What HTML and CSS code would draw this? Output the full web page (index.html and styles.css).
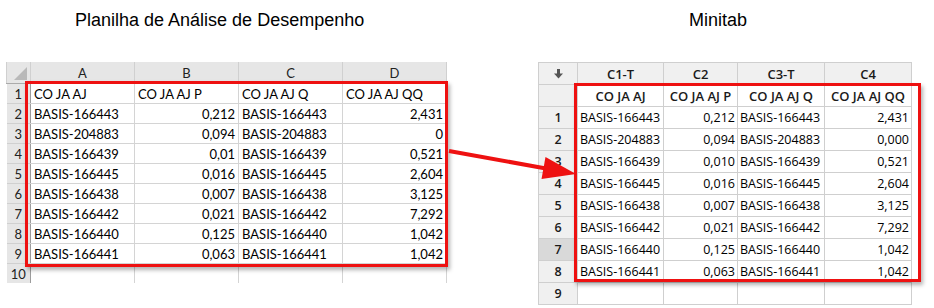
FILE: index.html
```html
<!DOCTYPE html>
<html lang="pt">

<head>
    <meta charset="UTF-8">
    <title>Planilha x Minitab</title>
    <link rel="stylesheet" href="styles.css">
</head>

<body>
    <div class="page">
        <section class="panel excel">
            <h1 class="title">Planilha de Análise de Desempenho</h1>
            <div class="sheet">
                <table class="grid">
                    <colgroup>
                        <col class="rowhead">
                        <col><col><col><col>
                    </colgroup>
                    <thead>
                        <tr>
                            <th class="corner"><span class="tri"></span></th>
                            <th>A</th>
                            <th>B</th>
                            <th>C</th>
                            <th>D</th>
                        </tr>
                    </thead>
                    <tbody id="excel-body"></tbody>
                </table>
                <div class="highlight"></div>
            </div>
        </section>

        <section class="panel minitab">
            <h1 class="title">Minitab</h1>
            <div class="sheet">
                <table class="grid">
                    <colgroup>
                        <col class="rowhead">
                        <col class="c1"><col class="c2"><col class="c3"><col class="c4">
                    </colgroup>
                    <thead>
                        <tr class="labels">
                            <th class="corner">
                                <svg width="9" height="10" viewBox="0 0 9 10">
                                    <rect x="3" y="0" width="3" height="5" fill="#555"/>
                                    <path d="M0 4.5 H9 L4.5 9.5 Z" fill="#555"/>
                                </svg>
                            </th>
                            <th>C1-T</th>
                            <th>C2</th>
                            <th>C3-T</th>
                            <th>C4</th>
                        </tr>
                        <tr class="names">
                            <th class="corner"></th>
                            <th>CO JA AJ</th>
                            <th>CO JA AJ P</th>
                            <th>CO JA AJ Q</th>
                            <th>CO JA AJ QQ</th>
                        </tr>
                    </thead>
                    <tbody id="minitab-body"></tbody>
                </table>
                <div class="highlight"></div>
            </div>
        </section>

        <svg class="arrow" width="934" height="308" viewBox="0 0 934 308">
            <line x1="449" y1="151" x2="546" y2="168.5" stroke="#ee1111" stroke-width="4"/>
            <polygon points="576,174 545.5,157 541.5,179" fill="#ee1111"/>
        </svg>
    </div>

    <script>
        const rows = [
            ['BASIS-166443', '0,212', '0,212', 'BASIS-166443', '2,431', '2,431'],
            ['BASIS-204883', '0,094', '0,094', 'BASIS-204883', '0', '0,000'],
            ['BASIS-166439', '0,01', '0,010', 'BASIS-166439', '0,521', '0,521'],
            ['BASIS-166445', '0,016', '0,016', 'BASIS-166445', '2,604', '2,604'],
            ['BASIS-166438', '0,007', '0,007', 'BASIS-166438', '3,125', '3,125'],
            ['BASIS-166442', '0,021', '0,021', 'BASIS-166442', '7,292', '7,292'],
            ['BASIS-166440', '0,125', '0,125', 'BASIS-166440', '1,042', '1,042'],
            ['BASIS-166441', '0,063', '0,063', 'BASIS-166441', '1,042', '1,042']
        ];

        function buildExcel() {
            const body = document.getElementById('excel-body');
            let html = '<tr><th>1</th><td>CO JA AJ</td><td>CO JA AJ P</td><td>CO JA AJ Q</td><td>CO JA AJ QQ</td></tr>';
            rows.forEach((r, i) => {
                html += `<tr><th>${i + 2}</th><td>${r[0]}</td><td class="num">${r[1]}</td><td>${r[3]}</td><td class="num">${r[4]}</td></tr>`;
            });
            html += '<tr class="cut"><th>10</th><td></td><td></td><td></td><td></td></tr>';
            body.innerHTML = html;
        }

        function buildMinitab() {
            const body = document.getElementById('minitab-body');
            let html = '';
            rows.forEach((r, i) => {
                const sel = i === 6 ? ' class="sel"' : '';
                html += `<tr><th${sel}>${i + 1}</th><td>${r[0]}</td><td class="num">${r[2]}</td><td>${r[3]}</td><td class="num">${r[5]}</td></tr>`;
            });
            html += '<tr><th>9</th><td></td><td></td><td></td><td></td></tr>';
            body.innerHTML = html;
        }

        buildExcel();
        buildMinitab();
    </script>
</body>

</html>
```

FILE: styles.css
```css
body {
    margin: 0;
    padding: 0;
    background: white;
    color: #000;
    font-family: 'Liberation Sans', Arial, sans-serif;
}

.page {
    position: relative;
    width: 934px;
    height: 308px;
    display: flex;
    overflow: hidden;
}

.panel .title {
    margin: 0;
    height: 62px;
    line-height: 40px;
    font-size: 18px;
    font-weight: normal;
}

.excel {
    padding-left: 6px;
    width: 524px;
}

.excel .title {
    padding-left: 69px;
}

.minitab {
    margin-left: 8px;
}

.minitab .title {
    text-align: center;
    width: 360px;
}

.sheet {
    position: relative;
}

.grid {
    border-collapse: collapse;
    table-layout: fixed;
}

.grid td,
.grid th {
    padding: 0 3px;
    white-space: nowrap;
    overflow: hidden;
}

/* Excel */

.excel .grid {
    width: 440px;
    font-family: Lato, sans-serif;
    font-size: 13px;
    line-height: 15px;
}

.excel .grid col {
    width: 104px;
}

.excel .grid col.rowhead {
    width: 24px;
}

.excel .grid tr {
    height: 20px;
}

.excel .grid thead tr {
    height: 21px;
}

.excel .grid th {
    background-color: #e6e6e6;
    font-weight: normal;
    color: #222;
    border: 1px solid #d0d0d0;
}

.excel .grid thead th {
    border-top: none;
    border-bottom: 1px solid #ababab;
    padding: 4px 3px 1px;
}

.excel .grid thead th.corner {
    position: relative;
}

.excel .grid tbody th {
    text-align: center;
    padding: 3px 0 1px;
    border-left: none;
    border-right: 1px solid #9c9c9c;
}

.excel .grid td {
    border: 1px solid #d4d4d4;
    padding: 3px 3px 1px;
}

.excel .grid tr.cut th,
.excel .grid tr.cut td {
    vertical-align: top;
    border-bottom: none;
}

.excel .grid td.num {
    text-align: right;
}

.excel .tri {
    position: absolute;
    right: 3px;
    bottom: 3px;
    width: 0;
    height: 0;
    border-left: 13px solid transparent;
    border-bottom: 13px solid #b9b9b9;
}

.excel .highlight {
    left: 19px;
    top: 19px;
    width: 417px;
    height: 180px;
}

/* Minitab */

.minitab .grid {
    width: 373px;
    font-family: 'Open Sans', sans-serif;
    font-size: 12.5px;
}

.minitab .grid col.rowhead { width: 39px; }
.minitab .grid col.c1 { width: 86px; }
.minitab .grid col.c2 { width: 74px; }
.minitab .grid col.c3 { width: 87px; }
.minitab .grid col.c4 { width: 87px; }

.minitab .grid tr {
    height: 22px;
}

.minitab .grid th {
    font-weight: 600;
    color: #1a1a1a;
    background-color: #f0f0f0;
    border: 1px solid #cfcfcf;
    text-align: center;
}

.minitab .grid thead .names th {
    background-color: white;
    padding: 0 2px;
    font-size: 13px;
}

.minitab .grid thead .labels th {
    font-size: 13px;
}

.minitab .grid thead .names th.corner {
    background-color: #f0f0f0;
}

.minitab .grid tbody th.sel {
    background-color: #d9d9d9;
}

.minitab .grid td {
    border: 1px solid #cfcfcf;
    padding: 0 2px;
}

.minitab .grid td.num {
    text-align: right;
}

.minitab .highlight {
    left: 36px;
    top: 21px;
    width: 341px;
    height: 193px;
}

.highlight {
    position: absolute;
    border: 3px solid #ee1111;
    box-shadow: 2px 3px 4px rgba(0, 0, 0, 0.3);
    pointer-events: none;
}

.arrow {
    position: absolute;
    left: 0;
    top: 0;
}
```
